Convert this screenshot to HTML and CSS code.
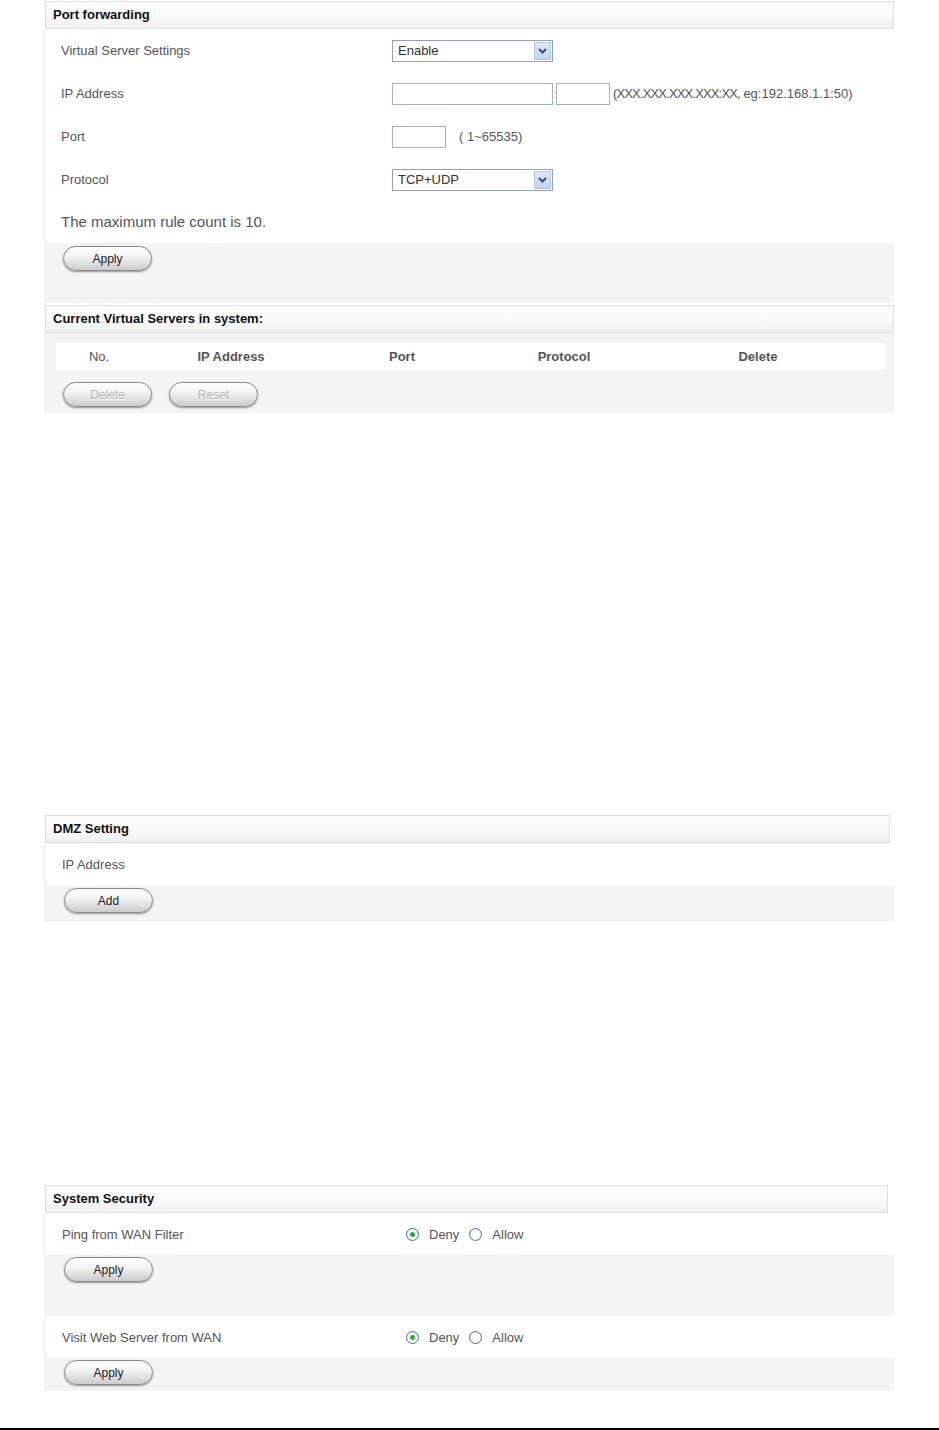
FILE: index.html
```html
<!DOCTYPE html>
<html lang="en">
<head>
<meta charset="utf-8">
<title>Port forwarding</title>
<link rel="stylesheet" href="styles.css">
</head>
<body>
<div class="page">
  <div class="wrap">
    <section class="panel pf">
      <div class="panel-head">Port forwarding</div>
      <div class="form">
        <div class="row">
          <span class="label">Virtual Server Settings</span>
          <div class="select"><span class="sel-text">Enable</span><span class="arrow"><svg width="9" height="6" viewBox="0 0 9 6"><path d="M1 1 L4.5 4.5 L8 1" fill="none" stroke="#3a4d72" stroke-width="2"/></svg></span></div>
        </div>
        <div class="row">
          <span class="label">IP Address</span>
          <div class="ctrl">
            <span class="input ip"></span><span class="colon">:</span><span class="input port"></span>
            <span class="hint"><span class="tight">(XXX.XXX.XXX.XXX:XX,</span> eg:192.168.1.1:50)</span>
          </div>
        </div>
        <div class="row">
          <span class="label">Port</span>
          <div class="ctrl">
            <span class="input port"></span>
            <span class="hint range">( 1~65535)</span>
          </div>
        </div>
        <div class="row">
          <span class="label">Protocol</span>
          <div class="select"><span class="sel-text">TCP+UDP</span><span class="arrow"><svg width="9" height="6" viewBox="0 0 9 6"><path d="M1 1 L4.5 4.5 L8 1" fill="none" stroke="#3a4d72" stroke-width="2"/></svg></span></div>
        </div>
        <p class="note">The maximum rule count is 10.</p>
      </div>
      <div class="actions a60"><button class="btn">Apply</button></div>
    </section>

    <section class="panel list">
      <div class="panel-head">Current Virtual Servers in system:</div>
      <div class="gray-body">
        <div class="table-head">
          <span class="th normal">No.</span>
          <span class="th">IP Address</span>
          <span class="th">Port</span>
          <span class="th">Protocol</span>
          <span class="th">Delete</span>
          <span class="th"></span>
        </div>
        <div class="btn-row">
          <button class="btn disabled">Delete</button>
          <button class="btn disabled">Reset</button>
        </div>
      </div>
    </section>

    <section class="panel dmz">
      <div class="panel-head narrow4">DMZ Setting</div>
      <div class="row2 narrow4"><span class="label">IP Address</span></div>
      <div class="actions a35"><button class="btn">Add</button></div>
    </section>

    <section class="panel sec">
      <div class="panel-head narrow6">System Security</div>
      <div class="row2 narrow6">
        <span class="label wide">Ping from WAN Filter</span>
        <div class="radios">
          <span class="radio checked"><span class="dot"></span></span><span class="rlabel">Deny</span>
          <span class="radio"></span><span class="rlabel">Allow</span>
        </div>
      </div>
      <div class="actions a61"><button class="btn">Apply</button></div>
      <div class="row2 narrow6">
        <span class="label wide">Visit Web Server from WAN</span>
        <div class="radios">
          <span class="radio checked"><span class="dot"></span></span><span class="rlabel">Deny</span>
          <span class="radio"></span><span class="rlabel">Allow</span>
        </div>
      </div>
      <div class="actions a33"><button class="btn">Apply</button></div>
    </section>
  </div>
  <div class="footer-line"></div>
</div>
</body>
</html>
```

FILE: styles.css
```css
* { box-sizing: border-box; }
body {
  margin: 0;
  background: #fff;
  font-family: "Liberation Sans", Arial, sans-serif;
  font-size: 13px;
  color: #555;
}
.page {
  width: 939px;
  height: 1430px;
  display: flex;
  flex-direction: column;
}
.wrap {
  margin-left: 44px;
  width: 850px;
}
.panel-head {
  height: 28px;
  margin-left: 1px;
  border: 1px solid #dedede;
  background: linear-gradient(#fdfdfd, #f9f9f9 60%, #f0f0f0);
  padding-left: 7px;
  font-weight: bold;
  color: #111;
  line-height: 26px;
}
.panel-head.narrow4 { margin-right: 4px; }
.panel-head.narrow6 { margin-right: 6px; }

.pf { margin-top: 1px; }
.list { margin-top: 2px; }
.dmz { margin-top: 402px; }
.sec { margin-top: 264px; }

.form {
  border-left: 1px solid #ececec;
  padding-left: 16px;
}
.row {
  height: 43px;
  display: grid;
  grid-template-columns: 331px 1fr;
  align-items: center;
}
.label { color: #555; }
.ctrl { display: flex; align-items: center; }
.select {
  width: 161px;
  height: 22px;
  border: 1px solid #8ea3c2;
  display: flex;
  align-items: center;
  justify-content: space-between;
  padding: 1px 1px 1px 5px;
  background: #fff;
}
.sel-text { color: #333; }
.arrow {
  width: 17px;
  height: 18px;
  background: linear-gradient(#dde7f8, #c3d3f1);
  border: 1px solid #b3c4e4;
  display: flex;
  align-items: center;
  justify-content: center;
}
.input {
  height: 22px;
  border: 1px solid #9fb1c9;
  background: #fff;
  display: inline-block;
}
.input.ip { width: 161px; }
.input.port { width: 54px; }
.colon { width: 3px; color: #999; font-size: 11px; text-align: center; }
.hint { margin-left: 3px; color: #555; }
.hint .tight { letter-spacing: -0.85px; }
.hint.range { margin-left: 13px; }
.note {
  margin: 0;
  height: 42px;
  line-height: 42px;
  font-size: 15px;
  color: #555;
}
.actions {
  background: #f4f4f4;
  padding: 3px 0 0 19px;
}
.a60 { height: 60px; }
.a35 { height: 35px; padding: 2px 0 0 20px; }
.a61 { height: 61px; padding: 2px 0 0 20px; }
.a33 { height: 33px; padding: 2px 0 0 20px; }

.btn {
  width: 89px;
  height: 25px;
  border-radius: 13px;
  border: 1px solid #8a8a8a;
  background: linear-gradient(#ffffff, #f3f3f3 40%, #dcdcdc 75%, #cbcbcb);
  box-shadow: 0 1px 2px rgba(0,0,0,0.4);
  font-family: "Liberation Sans", Arial, sans-serif;
  font-size: 12px;
  color: #222;
  padding: 0;
  line-height: 20px;
}
.btn.disabled {
  color: #b4b4b4;
  text-shadow: 0 1px 0 #fff;
}

.gray-body {
  background: #f4f4f4;
  height: 80px;
  padding: 10px 9px 0 12px;
}
.table-head {
  height: 27px;
  background: #fff;
  display: grid;
  grid-template-columns: 86px 178px 164px 160px 228px 1fr;
  align-items: center;
}
.th {
  text-align: center;
  font-weight: bold;
  color: #555;
}
.th.normal { font-weight: normal; }
.btn-row {
  display: flex;
  gap: 17px;
  margin-top: 12px;
  padding-left: 7px;
}

.row2 {
  height: 43px;
  display: flex;
  align-items: center;
  border-left: 1px solid #ececec;
  padding-left: 17px;
  background: #fff;
}
.row2.narrow6 { height: 42px; }
.label.wide { width: 344px; }
.radios { display: flex; align-items: center; }
.radio {
  width: 13px;
  height: 13px;
  border-radius: 50%;
  border: 1px solid #4f6f92;
  background: radial-gradient(circle at 50% 60%, #fff 35%, #dfe5ec);
  display: flex;
  align-items: center;
  justify-content: center;
}
.dot {
  width: 5px;
  height: 5px;
  border-radius: 50%;
  background: #2ea83a;
}
.rlabel { margin-left: 10px; margin-right: 10px; color: #555; }

.footer-line {
  margin-top: auto;
  height: 2px;
  background: #000;
}
```
